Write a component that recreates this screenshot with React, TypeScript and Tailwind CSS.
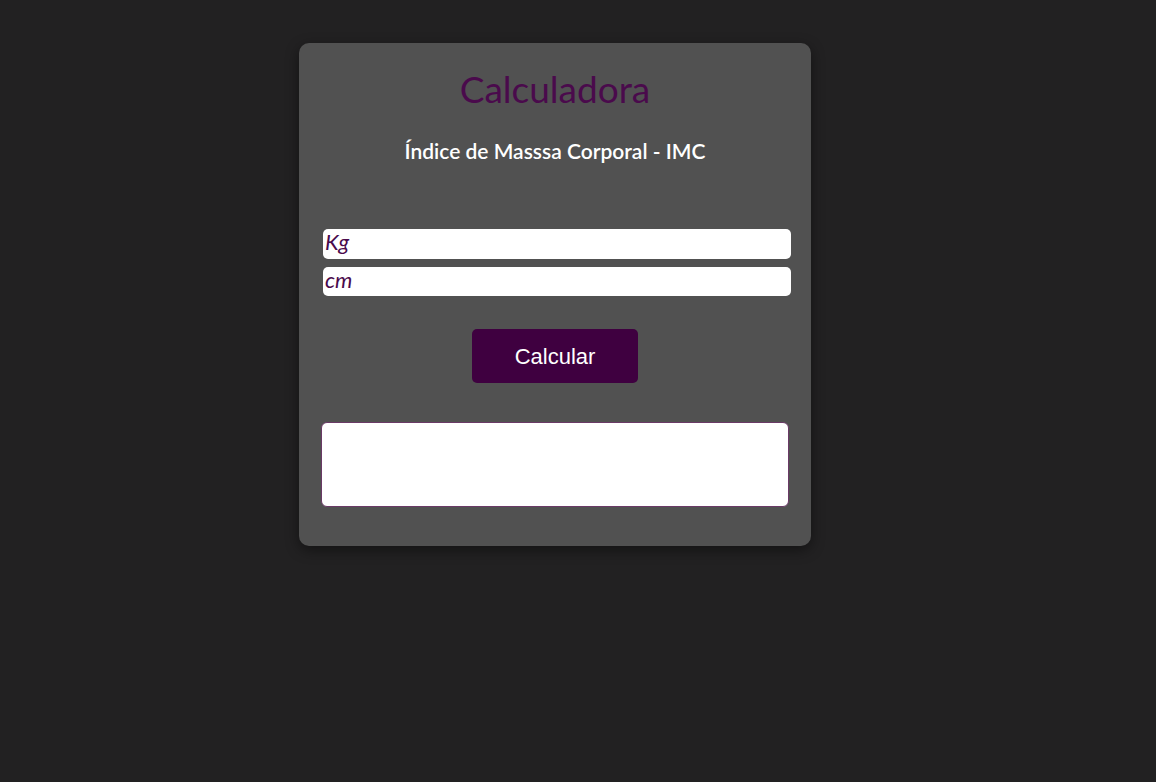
export default function App() {
  return (
    <div className="min-h-screen w-full bg-[#222122] pt-[43px] font-['Lato','Noto_Sans',sans-serif]">
      <div className="ml-[299px] flex h-[503px] w-[512px] flex-col items-center rounded-[10px] bg-[#515151] shadow-[0_4px_14px_rgba(0,0,0,0.45)]">
        <h1 className="mt-[23px] text-[37px] leading-[46px] text-[#4a0a4c]">Calculadora</h1>
        <h2 className="mt-[25px] text-[21px] font-semibold leading-[28px] text-white">
          Índice de Masssa Corporal - IMC
        </h2>

        <div className="mt-[64px] ml-[24px] flex w-[468px] flex-col gap-[8px] self-start">
          <input
            type="text"
            placeholder="Kg"
            className="h-[30px] w-full rounded-[5px] bg-white px-[2px] pb-[5px] text-[22px] italic text-[#4a0a4c] placeholder:text-[#4a0a4c] outline-none"
          />
          <input
            type="text"
            placeholder="cm"
            className="h-[29px] w-full rounded-[5px] bg-white px-[2px] pb-[5px] text-[22px] italic text-[#4a0a4c] placeholder:text-[#4a0a4c] outline-none"
          />
        </div>

        <button className="mt-[33px] h-[54px] w-[166px] rounded-[5px] bg-[#3f0040] font-['Liberation_Sans',Arial,sans-serif] text-[22px] text-white">
          Calcular
        </button>

        <div className="mt-[39px] ml-[22px] h-[85px] w-[468px] self-start rounded-[6px] border border-[#6a3a66] bg-white" />
      </div>
    </div>
  );
}
